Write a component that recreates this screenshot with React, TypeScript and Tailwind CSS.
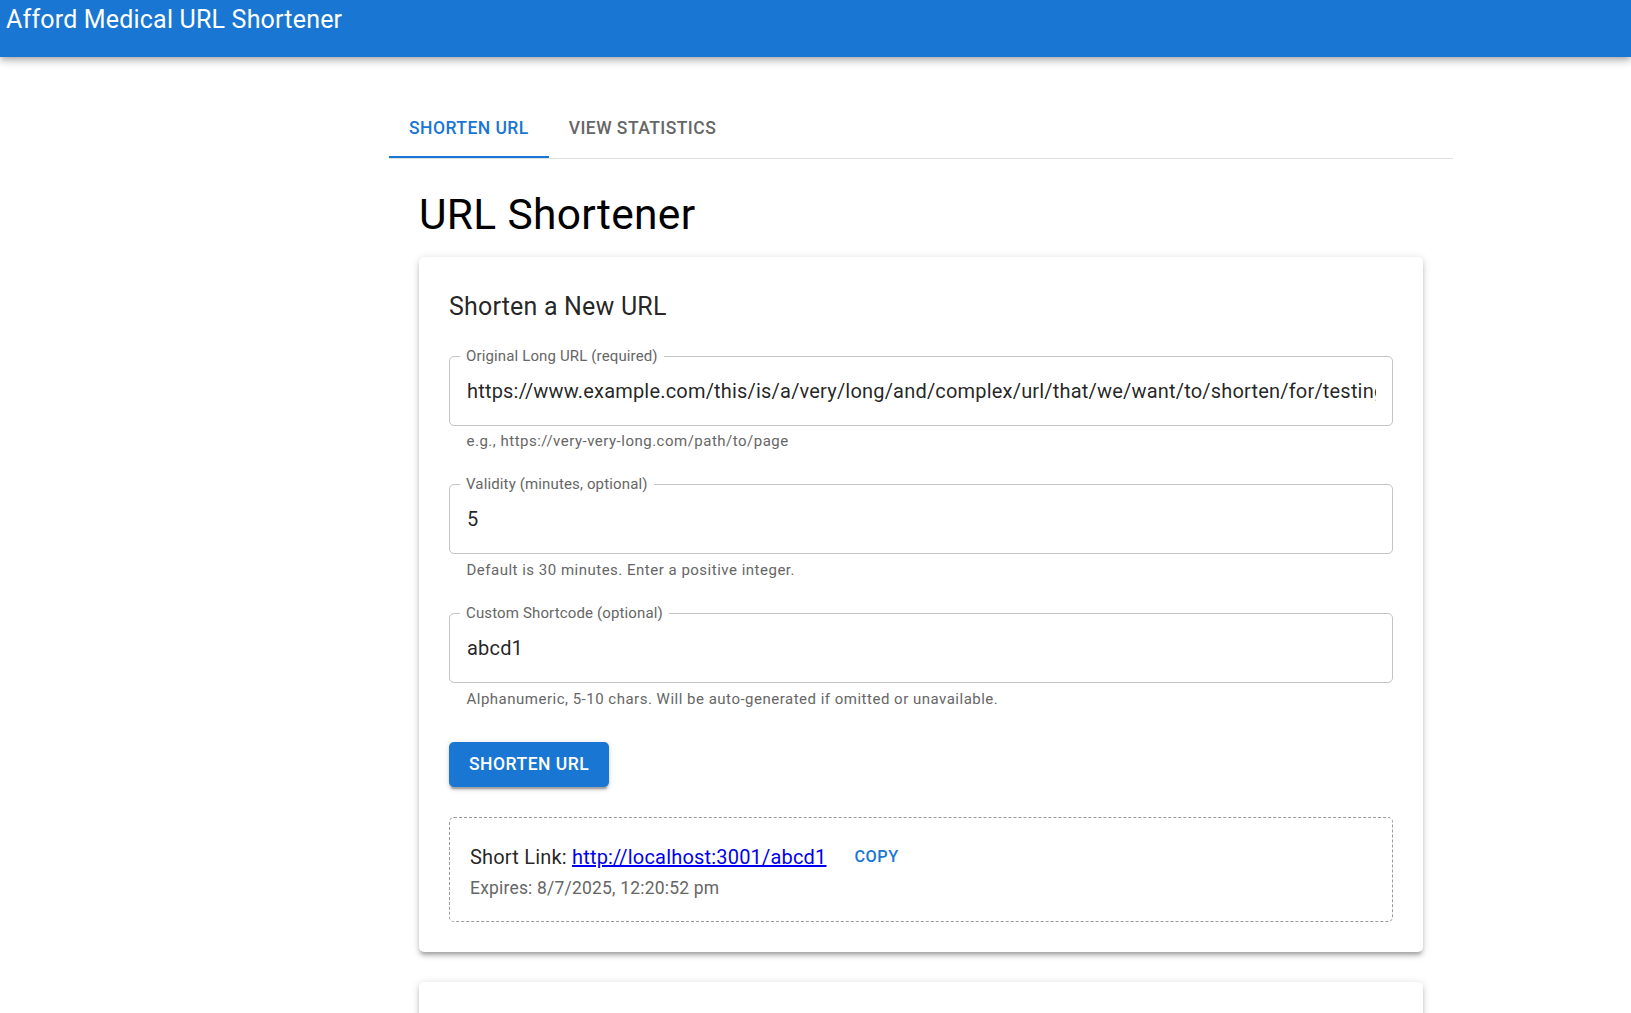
import React from "react";

const cardShadow =
  "shadow-[0px_3.75px_3.75px_-2.5px_rgba(0,0,0,0.2),0px_3.75px_5px_0px_rgba(0,0,0,0.14),0px_1.25px_10px_0px_rgba(0,0,0,0.12)]";

function Field({ label, value, helper }: { label: string; value: string; helper: string }) {
  return (
    <div className="mt-[20px] mb-[10px] flex flex-col">
      <div className="relative flex h-[70px] items-center rounded-[5px] border border-[#c4c4c4] pl-[17px] pr-[16px]">
        <span className="absolute left-[10px] top-[-1px] -translate-y-1/2 bg-white px-[6px] text-[15px] leading-[15px] tracking-[0.14px] text-[#666666]">
          {label}
        </span>
        <input
          readOnly
          value={value}
          className="w-full bg-transparent text-[20px] tracking-[0.19px] text-[rgba(0,0,0,0.87)] outline-none"
        />
      </div>
      <div className="mx-[17.5px] mt-[3.75px] text-[15px] leading-[25px] tracking-[0.5px] text-[#666666]">
        {helper}
      </div>
    </div>
  );
}

export default function App() {
  return (
    <div className="min-h-screen bg-white font-['Roboto','Liberation_Sans',sans-serif] text-[rgba(0,0,0,0.87)]">
      <header className="relative z-10 h-[57px] bg-[#1976d2] text-white shadow-[0px_2.5px_5px_-1.25px_rgba(0,0,0,0.2),0px_5px_6.25px_0px_rgba(0,0,0,0.14),0px_1.25px_12.5px_0px_rgba(0,0,0,0.12)]">
        <div className="pl-[6px] text-[25px] font-normal leading-[39px] tracking-[0.19px]">
          Afford Medical URL Shortener
        </div>
      </header>

      <main className="ml-[389px] w-[1064px] pt-[41px]">
        <div className="flex border-b border-[#e0e0e0]">
          <div className="relative flex h-[60px] items-center justify-center px-[20px] text-[17.5px] font-medium uppercase tracking-[0.45px] text-[#1976d2]">
            Shorten URL
            <span className="absolute bottom-0 left-0 right-0 h-[2.5px] bg-[#1976d2]" />
          </div>
          <div className="flex h-[60px] items-center justify-center px-[20px] text-[17.5px] font-medium uppercase tracking-[0.45px] text-[#666666]">
            View Statistics
          </div>
        </div>

        <div className="px-[30px] pt-[30px]">
          <h1 className="mb-[15px] text-[42.5px] font-normal leading-[52.5px] tracking-[0.31px] text-black">
            URL Shortener
          </h1>

          <section className={`flex flex-col rounded-[5px] bg-white p-[30px] ${cardShadow}`}>
            <h2 className="mb-[9px] text-[25px] font-normal leading-[40px] tracking-[0.19px]">
              Shorten a New URL
            </h2>

            <Field
              label="Original Long URL (required)"
              value="https://www.example.com/this/is/a/very/long/and/complex/url/that/we/want/to/shorten/for/testing/purposes"
              helper="e.g., https://very-very-long.com/path/to/page"
            />
            <Field
              label="Validity (minutes, optional)"
              value="5"
              helper="Default is 30 minutes. Enter a positive integer."
            />
            <Field
              label="Custom Shortcode (optional)"
              value="abcd1"
              helper="Alphanumeric, 5-10 chars. Will be auto-generated if omitted or unavailable."
            />

            <button className="mt-[20px] h-[45px] self-start rounded-[5px] bg-[#1976d2] px-[20px] text-[17.5px] font-medium uppercase tracking-[0.5px] text-white shadow-[0px_3.75px_1.25px_-2.5px_rgba(0,0,0,0.2),0px_2.5px_2.5px_0px_rgba(0,0,0,0.14),0px_1.25px_6.25px_0px_rgba(0,0,0,0.12)]">
              Shorten URL
            </button>

            <div className="mt-[30px] rounded-[5px] border border-dashed border-[#9a9a9a] p-[20px]">
              <div className="flex h-[38px] items-center text-[20px] tracking-[0.19px]">
                <span className="whitespace-pre">Short Link: </span>
                <a href="#" className="text-[#0000ee] underline">
                  http://localhost:3001/abcd1
                </a>
                <button className="ml-[10px] h-[38px] min-w-[80px] px-[6px] text-[16.25px] font-medium uppercase tracking-[0.5px] text-[#1976d2]">
                  Copy
                </button>
              </div>
              <div className="text-[17.5px] leading-[25px] tracking-[0.19px] text-[#666666]">
                Expires: 8/7/2025, 12:20:52 pm
              </div>
            </div>
          </section>

          <section className={`mt-[30px] h-[240px] rounded-[5px] bg-white p-[30px] ${cardShadow}`} />
        </div>
      </main>
    </div>
  );
}
